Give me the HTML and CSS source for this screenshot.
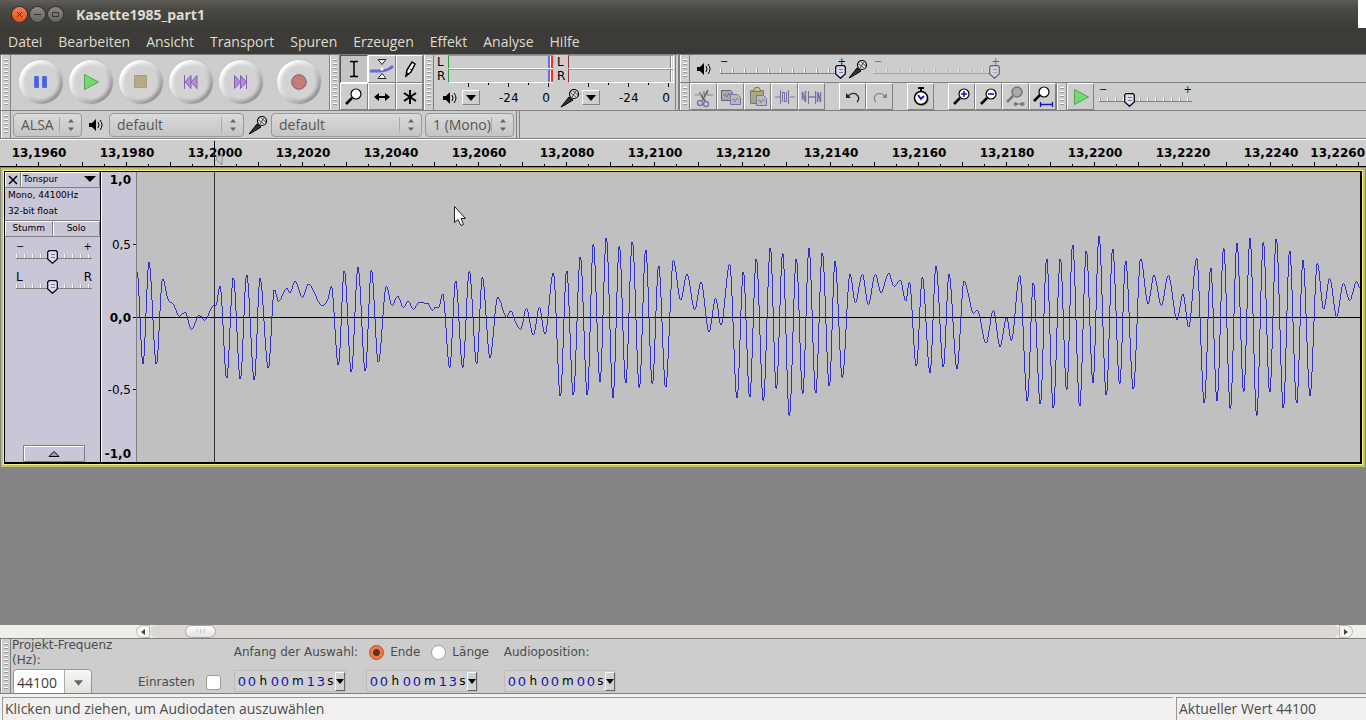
FILE: index.html
```
<!DOCTYPE html>
<html lang="de">
<head>
<meta charset="UTF-8">
<title>Kasette1985_part1</title>
<link rel="stylesheet" href="styles.css">
</head>
<body>

<!-- shared icons -->
<svg class="defs" width="0" height="0">
    <symbol id="i-speaker" viewBox="0 0 16 14">
        <path d="M1 5h3l4-4v12l-4-4H1z" fill="#000"/>
        <path d="M10 4q2 3 0 6M12 2q4 5 0 10" fill="none" stroke="#000"/>
    </symbol>
    <symbol id="i-mic" viewBox="0 0 20 20">
        <path d="M1 19L9 9l4 3-8 5z" fill="#333" stroke="#000"/>
        <circle cx="14" cy="6" r="4.500" fill="#ddd" stroke="#000" stroke-width="1.200"/>
        <path d="M11 5l5 4M13 3l5 4M12 9l4-6" stroke="#000" stroke-width=".6"/>
    </symbol>
    <symbol id="i-lens" viewBox="0 0 20 20">
        <path d="M8 11l-6 6" stroke="currentColor" stroke-width="2.500"/>
        <circle cx="12" cy="7" r="5" fill="#fff" stroke="currentColor" stroke-width="1.200"/>
    </symbol>
    <symbol id="i-down" viewBox="0 0 10 6"><path d="M0 0h10L5 6z"/></symbol>
</svg>

<header class="titlebar">
    <button class="win win-close" aria-label="Schließen"><svg viewBox="0 0 15 15"><path d="M5 5l5 5M10 5l-5 5"/></svg></button>
    <button class="win" aria-label="Minimieren"><svg viewBox="0 0 15 15"><path d="M4 7.500h7"/></svg></button>
    <button class="win" aria-label="Maximieren"><svg viewBox="0 0 15 15"><path d="M4.500 5.500h6v4h-6z"/></svg></button>
    <h1>Kasette1985_part1</h1>
</header>

<nav class="menu">
    <a href="#">Datei</a>
    <a href="#">Bearbeiten</a>
    <a href="#">Ansicht</a>
    <a href="#">Transport</a>
    <a href="#">Spuren</a>
    <a href="#">Erzeugen</a>
    <a href="#">Effekt</a>
    <a href="#">Analyse</a>
    <a href="#">Hilfe</a>
</nav>

<div class="toolbars">
    <!-- transport -->
    <div class="grip"></div>
    <div class="transport">
        <button class="round" aria-label="Pause"><svg width="16" height="16"><path d="M1.500 2.500h4v11h-4zM9.500 2.500h4v11h-4z" fill="#3f66ee" stroke="#5a74d8"/></svg></button>
        <button class="round" aria-label="Wiedergabe"><svg width="16" height="16"><path d="M1.500 .5v15l14-7.500z" fill="#6fdc6b" stroke="#5aa058"/></svg></button>
        <button class="round" aria-label="Stopp"><svg width="16" height="16"><path d="M1.500 1.500h12v12h-12z" fill="#baa987" stroke="#a99b80"/></svg></button>
        <button class="round" aria-label="Zum Anfang"><svg width="16" height="16"><path d="M1.500 1v14M8 1.500v13l-6-6.500zM14 1.500v13l-6-6.500z" fill="#b48be0" stroke="#8560a8"/></svg></button>
        <button class="round" aria-label="Zum Ende"><svg width="16" height="16"><path d="M13.500 1v14M1.500 1.500v13l6-6.500zM7.500 1.500v13l6-6.500z" fill="#b48be0" stroke="#8560a8"/></svg></button>
        <button class="round record" aria-label="Aufnahme"><svg width="16" height="16"><circle cx="8" cy="8" r="7.300" fill="#c47b7b" stroke="#8f5a5a"/></svg></button>
    </div>

    <!-- tools -->
    <div class="grip"></div>
    <div class="tools">
        <button class="tool on" aria-label="Auswahl"><svg width="20" height="20"><path d="M6 2.500h3l1 1 1-1h3M6 17.500h3l1-1 1 1h3M10 3v14" fill="none" stroke="#000" stroke-width="1.500"/></svg></button>
        <button class="tool" aria-label="Hüllkurve"><svg width="26" height="22"><path d="M1 13h10q8 0 13-5" fill="none" stroke="#6a6ae0" stroke-width="3"/><path d="M9 1.500h8l-4 5zM9 20.500h8l-4-5z" fill="#fff" stroke="#222"/><circle cx="13" cy="11" r="1.500" fill="#fff"/></svg></button>
        <button class="tool" aria-label="Zeichnen"><svg width="20" height="20"><path d="M6 17l1-6 5-8 3 2-4 8z" fill="#fff" stroke="#000" stroke-width="1.500"/><path d="M6 17l1-3 2 1zM10 10l2 1" stroke="#000"/></svg></button>
        <button class="tool" aria-label="Zoom"><svg width="20" height="20"><use href="#i-lens"/></svg></button>
        <button class="tool" aria-label="Verschieben"><svg width="20" height="20"><path d="M3 10h14" stroke="#000" stroke-width="2"/><path d="M2 10l5-4v8zM18 10l-5-4v8z"/></svg></button>
        <button class="tool" aria-label="Multi"><svg width="20" height="20"><path d="M10 3v14M4 6l12 8M16 6L4 14" stroke="#000" stroke-width="2"/></svg></button>
    </div>

    <!-- meters -->
    <div class="grip"></div>
    <div class="meters">
        <div class="meter play">
            <div class="chan"><span>L</span><i></i></div>
            <div class="chan"><span>R</span><i></i></div>
            <div class="ticks"></div>
            <div class="scale">
                <svg width="20" height="14"><use href="#i-speaker"/></svg>
                <button aria-label="Ausgabepegel"><svg width="10" height="6"><use href="#i-down"/></svg></button>
                <span class="mid">-24</span><span>0</span>
            </div>
        </div>
        <div class="meter rec">
            <div class="chan"><span>L</span><i></i></div>
            <div class="chan"><span>R</span><i></i></div>
            <div class="ticks"></div>
            <div class="scale">
                <svg width="20" height="20"><use href="#i-mic"/></svg>
                <button aria-label="Eingabepegel"><svg width="10" height="6"><use href="#i-down"/></svg></button>
                <span class="mid">-24</span><span>0</span>
            </div>
        </div>
    </div>

    <div class="stack">
        <!-- mixer -->
        <div class="bar">
            <div class="grip"></div>
            <svg class="mix-speaker" width="16" height="14"><use href="#i-speaker"/></svg>
            <label class="slider"><span>−</span><span>+</span><input type="range" value="100" aria-label="Ausgabelautstärke"></label>
            <svg class="mix-mic" width="20" height="20"><use href="#i-mic"/></svg>
            <label class="slider off"><span>−</span><span>+</span><input type="range" value="100" disabled aria-label="Eingabelautstärke"></label>
        </div>
        <!-- edit -->
        <div class="bar">
            <div class="grip"></div>
            <button class="edit" aria-label="Ausschneiden"><svg width="22" height="22"><path d="M2 9h4l1-3 2 6 2-7 1 6 2-6 1 5 1-1h4" fill="none" stroke="#888"/><path d="M15 4L9 15M8 9l5 7" fill="none" stroke="#666" stroke-width="1.500"/><circle cx="7" cy="17" r="2.500" fill="none" stroke="#7878b8" stroke-width="1.500"/><circle cx="13" cy="18" r="2.500" fill="none" stroke="#7878b8" stroke-width="1.500"/></svg></button>
            <button class="edit" aria-label="Kopieren"><svg width="22" height="22"><path d="M1.500 4.500h9l2 2v8h-11z" fill="#aaa" stroke="#666"/><path d="M3 10l2-2 2 3 2-4 2 3" fill="none" stroke="#777"/><path d="M10.500 8.500h7l3 3v7h-10z" fill="#bbb" stroke="#7474b4"/><path d="M12 14l2-1 1 3 2-4 2 2" fill="none" stroke="#888"/></svg></button>
            <button class="edit" aria-label="Einfügen"><svg width="22" height="22"><path d="M3.500 4.500h13v13h-13z" fill="#aaa884" stroke="#777"/><path d="M6 5.500h8l-2-4H8z" fill="#c8c070" stroke="#777"/><path d="M9.500 9.500h7l3 3v7h-10z" fill="#bbb" stroke="#7474b4"/><path d="M11 15l2-1 1 3 2-4 2 2" fill="none" stroke="#888"/></svg></button>
            <button class="edit" aria-label="Trimmen"><svg width="22" height="22"><path d="M1 11h5M16 11h5M8.500 16V6M10.500 6v10M12.500 6v10M8 6.500h3M10 15.500h3" fill="none" stroke="#7474b4"/><path d="M6.500 4v14M14.500 4v14" stroke="#777"/></svg></button>
            <button class="edit" aria-label="Stille"><svg width="22" height="22"><path d="M1.500 14V6l3 10V5M7.500 11h7M16.500 16V6l3 10V6" fill="none" stroke="#7474b4" stroke-width="1.500"/><path d="M7.500 5v13M14.500 5v13" stroke="#777"/></svg></button>
            <button class="edit gap" aria-label="Rückgängig"><svg width="20" height="20"><path d="M5 9q4-4 8-2 5 4 1 8" fill="none" stroke="#222" stroke-width="1.300"/><path d="M3 6v5h5z" fill="#222"/></svg></button>
            <button class="edit" aria-label="Wiederherstellen"><svg width="20" height="20"><path d="M15 9q-4-4-8-2-5 4-1 8" fill="none" stroke="#888" stroke-width="1.300"/><path d="M17 6v5h-5z" fill="#888"/></svg></button>
            <button class="edit gap" aria-label="Sync-Lock"><svg width="20" height="22"><circle cx="11" cy="13" r="7" fill="#999"/><circle cx="10" cy="12" r="6.500" fill="#fff" stroke="#000" stroke-width="1.500"/><path d="M10 5V2M7 2h6" stroke="#000" stroke-width="2"/><path d="M7 9l3 4 3-3" fill="none" stroke="#2020b0" stroke-width="2"/></svg></button>
            <button class="edit gap" aria-label="Vergrößern"><svg width="20" height="20"><use href="#i-lens"/><path d="M12 4v6M9 7h6" stroke="#1414b4" stroke-width="1.600"/></svg></button>
            <button class="edit" aria-label="Verkleinern"><svg width="20" height="20"><use href="#i-lens"/><path d="M9 7h6" stroke="#1414b4" stroke-width="1.600"/></svg></button>
            <button class="edit" aria-label="Auswahl einpassen"><svg width="22" height="22"><path d="M8 10l-6 6" stroke="#777" stroke-width="2.500"/><circle cx="12" cy="6" r="5" fill="#aaa" stroke="#777" stroke-width="1.500"/><path d="M8 18h12M10 16l3 2-3 2zM18 16l-3 2 3 2z" stroke="#777" fill="#777"/></svg></button>
            <button class="edit" aria-label="Projekt einpassen"><svg width="22" height="22"><path d="M8 9l-6 6" stroke="#000" stroke-width="2.500"/><circle cx="12" cy="6" r="5" fill="#fff" stroke="#000" stroke-width="1.200"/><path d="M8.500 16v5M20.500 16v5M9 18.500h11" stroke="#1414b4" stroke-width="1.300"/></svg></button>
            <div class="grip"></div>
            <button class="edit" aria-label="Mit Geschwindigkeit abspielen"><svg width="18" height="18"><path d="M2.500 1.500v15l14-7.500z" fill="#6fdc6b" stroke="#5aa058"/></svg></button>
            <label class="slider speed"><span>−</span><span>+</span><input type="range" value="31" aria-label="Geschwindigkeit"></label>
        </div>
    </div>
</div>

<!-- devices -->
<div class="devices">
    <div class="grip"></div>
    <select class="host" aria-label="Host"><option>ALSA</option></select>
    <svg class="dev-speaker" width="16" height="14"><use href="#i-speaker"/></svg>
    <select class="out" aria-label="Ausgabegerät"><option>default</option></select>
    <svg class="dev-mic" width="20" height="20"><use href="#i-mic"/></svg>
    <select class="in" aria-label="Eingabegerät"><option>default</option></select>
    <select class="channels" aria-label="Kanäle"><option>1 (Mono)</option></select>
    <div class="end"></div>
</div>

<!-- timeline -->
<div class="timeline">
    <span>13,1960</span><span>13,1980</span><span>13,2000</span><span>13,2020</span>
    <span>13,2040</span><span>13,2060</span><span>13,2080</span><span>13,2100</span>
    <span>13,2120</span><span>13,2140</span><span>13,2160</span><span>13,2180</span>
    <span>13,2200</span><span>13,2220</span><span>13,2240</span><span class="last">13,2260</span>
    <svg class="playhead" width="10" height="27"><path d="M.5 1v22" stroke="#000"/><path d="M8 14v11l-6-6z" fill="#ccc" stroke="#888"/></svg>
</div>

<main class="project">
    <section class="track">
        <div class="panel">
            <div class="panel-head">
                <button class="close" aria-label="Spur schließen"><svg width="10" height="10"><path d="M1 1l8 8M9 1l-8 8" stroke="#000" stroke-width="1.500"/></svg></button>
                <button class="name">Tonspur<svg width="12" height="6" viewBox="0 0 10 6" preserveAspectRatio="none"><path d="M0 0h10L5 6z"/></svg></button>
            </div>
            <p class="info">Mono, 44100Hz<br>32-bit float</p>
            <div class="panel-buttons"><button>Stumm</button><button>Solo</button></div>
            <label class="slider gain"><span>−</span><span>+</span><input type="range" value="47" aria-label="Verstärkung"></label>
            <label class="slider pan"><span>L</span><span>R</span><input type="range" value="47" aria-label="Balance"></label>
            <button class="collapse" aria-label="Einklappen"><svg width="12" height="8"><path d="M1 6.500h10L6 1.500z" fill="#a0a0b4" stroke="#000"/></svg></button>
        </div>
        <div class="levels">
            <b>1,0</b><span>0,5</span><b>0,0</b><span>-0,5</span><b>-1,0</b>
        </div>
        <svg class="wave" viewBox="21 -159 3669 870" preserveAspectRatio="none">
            <path class="zero" d="M21 277.500H3690"/>
            <path class="signal" id="signal"/>
            <path class="mark" d="M253.500 -159V711"/>
        </svg>
    </section>
    <svg class="pointer" width="14" height="22"><path d="M1.500 1.500v16l3.500-3 3 6 2.500-1-2.500-6h4.500z" fill="#fff" stroke="#222"/></svg>
</main>

<div class="scrollbar">
    <button class="left" aria-label="Links"><svg width="4" height="6"><path d="M4 0v6L0 3z" fill="#444"/></svg></button>
    <div class="trough"><div class="thumb">ı ı ı</div></div>
    <button class="right" aria-label="Rechts"><svg width="4" height="6"><path d="M0 0v6l4-3z" fill="#444"/></svg></button>
</div>

<div class="selection">
    <div class="grip"></div>
    <div class="rate">
        <label for="rate">Projekt-Frequenz (Hz):</label>
        <div class="combo">
            <input id="rate" type="text" value="44100">
            <button aria-label="Frequenz wählen"><svg width="9" height="6" viewBox="0 0 10 6"><path d="M0 0h10L5 6z" fill="#666"/></svg></button>
        </div>
    </div>
    <label class="snap">Einrasten <input type="checkbox"></label>
    <div class="range">
        <div class="captions">
            <span>Anfang der Auswahl:</span>
            <label class="pick"><input type="radio" name="mode" checked>Ende</label>
            <label class="pick"><input type="radio" name="mode">Länge</label>
        </div>
        <div class="times">
            <div class="time"><b>0</b><b>0</b><i>h</i><b>0</b><b>0</b><i class="m">m</i><b>1</b><b>3</b><i>s</i><button aria-label="Format"><svg width="8" height="5" viewBox="0 0 10 6"><path d="M0 0h10L5 6z"/></svg></button></div>
            <div class="time"><b>0</b><b>0</b><i>h</i><b>0</b><b>0</b><i class="m">m</i><b>1</b><b>3</b><i>s</i><button aria-label="Format"><svg width="8" height="5" viewBox="0 0 10 6"><path d="M0 0h10L5 6z"/></svg></button></div>
        </div>
    </div>
    <div class="range">
        <div class="captions"><span>Audioposition:</span></div>
        <div class="times">
            <div class="time"><b>0</b><b>0</b><i>h</i><b>0</b><b>0</b><i class="m">m</i><b>0</b><b>0</b><i>s</i><button aria-label="Format"><svg width="8" height="5" viewBox="0 0 10 6"><path d="M0 0h10L5 6z"/></svg></button></div>
        </div>
    </div>
</div>

<footer class="status">
    <p>Klicken und ziehen, um Audiodaten auszuwählen</p>
    <p class="value">Aktueller Wert 44100</p>
</footer>

<script src="wave.js"></script>
</body>
</html>
```
FILE: styles.css
```
* {
box-sizing: border-box;
}

body {
margin: 0;
min-height: 100vh;
display: flex;
flex-direction: column;
background: #cdcdcd;
font-family: "Open Sans", "Noto Sans", sans-serif;
font-size: 14px;
color: #4c4c4c;
overflow-x: hidden;
}

button {
display: flex;
align-items: center;
justify-content: center;
flex: none;
padding: 0;
border: 0;
background: none;
font: inherit;
color: #000;
}

svg {
display: block;
flex: none;
}

p {
margin: 0;
}

.defs {
position: absolute;
}

/* window frame */
.titlebar {
display: flex;
align-items: center;
gap: 3px;
height: 28px;
padding-left: 12px;
border-right: 8px solid #fff;
background: linear-gradient(#5e5d57, #4b4a45 30%, #3c3b37);
}

.titlebar h1 {
margin: 0 0 0 10px;
font-size: 14px;
font-weight: 700;
color: #dfdbd2;
}

.win {
width: 15px;
height: 15px;
border-radius: 50%;
background: linear-gradient(#8b8981, #65645d);
box-shadow: 0 0 0 1px #33322e;
}

.win svg {
width: 15px;
height: 15px;
fill: none;
stroke: #35342f;
}

.win-close {
background: linear-gradient(#f58052, #e1531d);
}

.menu {
display: flex;
align-items: center;
gap: 16px;
height: 26px;
padding-left: 8px;
background: #3c3b37;
}

.menu a {
color: #dfdbd2;
text-decoration: none;
}

/* toolbars */
.toolbars {
display: flex;
border-top: 1px solid #7e7e7e;
border-bottom: 1px solid #808080;
}

.grip {
flex: none;
width: 11px;
border-left: 1px solid #808080;
border-right: 1px solid #808080;
background:
repeating-linear-gradient(#fff 0 1px, #999 1px 2px, transparent 2px 4px) 3px 4px / 4px calc(100% - 8px) no-repeat,
linear-gradient(90deg, #fff 1px, transparent 1px);
}

.transport {
display: flex;
align-items: center;
width: 318px;
padding: 0 0 1px 8px;
}

.round {
position: relative;
width: 44px;
height: 44px;
margin-right: 6px;
border-radius: 50%;
background: linear-gradient(135deg, #fff 18%, #d4d4d4 50%, #8a8a8a 88%);
box-shadow: 0 0 2px #bbb;
}

.round::before {
content: "";
position: absolute;
inset: 6px;
border-radius: 50%;
background: #d3d3d3;
box-shadow: 0 0 3px 2px #d3d3d3;
}

.round svg {
position: relative;
}

.record {
margin-left: 8px;
}

.tools {
display: grid;
grid-template-columns: 28px 28px 27px;
grid-template-rows: 28px 27px;
}

.tool,
.edit {
border: 1px solid;
border-color: #fff #808080 #808080 #fff;
}

.tool.on {
border-color: #555 #fff #fff #555;
background: #c4c4c4;
}

.meters {
display: flex;
width: 242px;
border-right: 1px solid #808080;
font: 12px "DejaVu Sans", sans-serif;
color: #000;
}

.meter {
width: 120px;
}

.chan {
display: flex;
height: 14px;
line-height: 14px;
}

.chan span {
width: 14px;
padding-left: 3px;
}

.chan i {
flex: 1;
border: 1px solid #fff;
border-top-color: #999;
border-left-color: #2f9e3f;
}

.play .chan i {
margin-right: 1px;
border-right: 0;
background: linear-gradient(90deg, #6a6af0 2px, #fff 2px 3px, #ff2a2a 3px) 99px 0 / 5px 100% no-repeat;
}

.rec .chan i {
border-left-color: #a03030;
background: linear-gradient(90deg, #808080 1px, #fff 1px) 101px 0 / 2px 100% no-repeat;
}

.ticks {
height: 5px;
margin-left: 34px;
background:
repeating-linear-gradient(90deg, #000 0 1px, transparent 1px 40px) 0 0 / 100% 4px no-repeat,
repeating-linear-gradient(90deg, transparent 0 20px, #000 20px 21px, transparent 21px 40px) 0 0 / 100% 2px no-repeat;
}

.scale {
display: flex;
align-items: center;
height: 19px;
padding: 0 4px 0 6px;
}

.scale button {
width: 18px;
height: 15px;
margin-left: 2px;
border: 1px solid;
border-color: #fff #808080 #808080 #fff;
}

.scale .mid {
margin: 0 auto 0 19px;
}

.stack {
flex: 1;
margin-left: 2px;
border-left: 1px solid #808080;
}

.bar {
display: flex;
align-items: center;
height: 27px;
}

.bar:first-child {
height: 28px;
border-bottom: 1px solid #808080;
}

.bar .grip {
align-self: stretch;
}

.edit {
width: 27px;
height: 27px;
}

.gap {
margin-left: 14px;
}

.mix-speaker {
margin: 0 8px 0 6px;
}

.mix-mic {
margin: 0 6px 0 2px;
}

/* sliders */
.slider {
display: grid;
grid-template-columns: 1fr auto;
grid-template-rows: 8px 14px;
flex: none;
width: 126px;
height: 24px;
font: 10px/10px "DejaVu Sans", sans-serif;
color: #000;
}

.slider input {
grid-column: 1 / 3;
appearance: none;
width: 100%;
height: 14px;
margin: 0;
background:
repeating-linear-gradient(90deg, #fff 0 1px, #999 1px 2px, transparent 2px 12px) 0 4px / 100% 4px no-repeat,
linear-gradient(#808080, #808080) 0 8px / 100% 1px no-repeat;
}

.slider input::-webkit-slider-thumb {
appearance: none;
width: 11px;
height: 14px;
background: url("data:image/svg+xml,%3Csvg xmlns='http://www.w3.org/2000/svg' width='11' height='14'%3E%3Cpath d='M2 .7h7l1.300 1.300v7L5.500 13.300.7 9V2z' fill='%23dcdcf0' stroke='%23000' stroke-width='1.200'/%3E%3Cpath d='M4 4.500h4M4 7.500h4' stroke='%237878a0'/%3E%3C/svg%3E");
}

.slider.off {
opacity: .5;
}

.speed {
width: 93px;
margin-left: 5px;
}

.gain,
.pan {
width: 76px;
margin-left: 11px;
}

.gain {
margin-top: 5px;
}

.pan {
margin-top: 6px;
font-size: 12px;
}

.speed input,
.gain input,
.pan input {
background:
repeating-linear-gradient(90deg, #fff 0 1px, #aaa 1px 2px, transparent 2px 8px) 0 4px / 100% 4px no-repeat,
linear-gradient(#808080, #808080) 0 8px / 100% 1px no-repeat;
}

/* devices */
.devices {
display: flex;
align-items: center;
height: 28px;
border-bottom: 1px solid #808080;
}

.devices .grip,
.devices .end {
align-self: stretch;
}

.devices select {
appearance: none;
height: 24px;
padding: 0 26px 1px 7px;
border: 1px solid #999;
border-radius: 4px;
background:
url("data:image/svg+xml,%3Csvg xmlns='http://www.w3.org/2000/svg' width='22' height='18'%3E%3Cpath d='M.5 1v16' stroke='%23aaa'/%3E%3Cpath d='M9 6.500h6L12 3zM9 11.500h6l-3 3.500z' fill='%23666'/%3E%3C/svg%3E") right center no-repeat,
linear-gradient(#dadada, #c4c4c4);
font: 14px "Open Sans", sans-serif;
color: #58554f;
}

.host {
width: 69px;
margin-left: 2px;
}

.out {
width: 135px;
}

.in {
width: 151px;
}

.devices .channels {
width: 89px;
margin-left: 3px;
padding-right: 22px;
}

.dev-speaker {
margin: 0 5px 0 6px;
}

.dev-mic {
margin: 0 3px 0 4px;
}

.end {
width: 4px;
margin-left: 2px;
border-left: 1px solid #808080;
border-right: 1px solid #808080;
}

/* timeline */
.timeline {
position: relative;
display: flex;
height: 28px;
overflow: hidden;
border-top: 1px solid #fff;
border-bottom: 1px solid #000;
background:
repeating-linear-gradient(90deg, transparent 0 38px, #000 38px 39px, transparent 39px 44px) 0 22px / 100% 4px no-repeat,
repeating-linear-gradient(90deg, transparent 0 16px, #000 16px 17px, transparent 17px 44px) 0 24px / 100% 2px no-repeat;
font: bold 12px/26px "DejaVu Sans", sans-serif;
color: #000;
}

.timeline span {
flex: 0 0 88px;
text-align: center;
}

.timeline span:first-child {
margin-left: -5px;
}

.timeline .last {
display: flex;
flex: 1;
justify-content: flex-end;
min-width: 0;
padding-right: 1px;
}

.playhead {
position: absolute;
left: 214px;
top: 0;
}

/* track */
.project {
position: relative;
flex: 1;
background: #858585;
}

.track {
display: flex;
height: 293px;
margin: 4px;
border: solid #000;
border-width: 1px 2px 2px 1px;
box-shadow: 0 0 0 1px #f7f27a, 0 0 0 3px #c3bf7c;
}

.panel {
display: flex;
flex-direction: column;
width: 96px;
border-right: 1px solid #000;
background: #c9c7d7;
font: 10px "DejaVu Sans", sans-serif;
color: #000;
}

.panel-head,
.panel-buttons {
display: flex;
height: 16px;
border-bottom: 1px solid #808080;
}

.panel-head button,
.panel-buttons button {
border: 1px solid;
border-color: #fff #808080 #c9c7d7 #fff;
}

.panel-head .close {
width: 16px;
}

.panel-head .name {
flex: 1;
justify-content: space-between;
padding: 0 3px 2px 1px;
}

.info {
height: 33px;
margin-top: -1px;
padding-left: 3px;
font-size: 9px;
line-height: 16px;
}

.name,
.panel-buttons {
font-size: 9px;
}

.panel-buttons {
height: 17px;
border-top: 1px solid #808080;
}

.panel-buttons button {
flex: 1;
padding-bottom: 2px;
}

.collapse {
width: 62px;
height: 17px;
margin: auto 0 0 18px;
border: 1px solid #808080;
box-shadow: inset 1px 1px #fff;
}

.levels {
display: grid;
grid-template-rows: 36px 73px 73px 72px 36px;
align-items: center;
justify-items: end;
width: 36px;
padding-right: 5px;
border-left: 1px solid #fff;
border-right: 1px solid #808080;
background:
linear-gradient(#000, #000) 31px 72px / 3px 1px no-repeat,
linear-gradient(#000, #000) 31px 145px / 3px 1px no-repeat,
linear-gradient(#000, #000) 31px 217px / 3px 1px no-repeat,
#c9c7d7;
font: 12px/16px "DejaVu Sans", sans-serif;
color: #000;
}

.levels b:first-child {
align-self: start;
}

.levels b:last-child {
align-self: end;
}

.wave {
flex: 1;
min-width: 0;
height: 290px;
background: #c0c0c0;
}

.wave path {
fill: none;
stroke: #000;
shape-rendering: crispEdges;
}

.zero,
.mark {
vector-effect: non-scaling-stroke;
}

.wave .signal {
stroke: #3232c8;
stroke-width: 3;
}

.wave .mark {
stroke: #333;
}

.pointer {
position: absolute;
left: 453px;
top: 38px;
}

/* scrollbar */
.scrollbar {
display: flex;
height: 13px;
padding: 0 13px 0 136px;
background: #f0eeeb;
}

.scrollbar button {
width: 14px;
border: 1px solid #bbb8b4;
background: #f4f3f1;
}

.scrollbar .left {
border-radius: 7px 0 0 7px;
}

.scrollbar .right {
border-radius: 0 7px 7px 0;
}

.trough {
flex: 1;
padding-left: 35px;
border-radius: 7px;
background: #dbd8d5;
}

.thumb {
width: 31px;
height: 13px;
border: 1px solid #aaa7a2;
border-radius: 7px;
background: linear-gradient(#fff, #e4e2df);
font-size: 7px;
line-height: 10px;
text-align: center;
color: #999;
}

/* selection bar */
.selection {
display: flex;
height: 56px;
overflow: hidden;
border-top: 1px solid #808080;
border-bottom: 1px solid #808080;
font: 12px "DejaVu Sans", sans-serif;
}

.rate {
width: 117px;
padding-left: 1px;
line-height: 15px;
}

.rate label {
display: block;
height: 29px;
margin-top: -1px;
}

.combo {
display: flex;
width: 79px;
height: 28px;
margin: 2px 0 0 1px;
border: 1px solid #9a9792;
border-radius: 4px;
background: #fff;
}

.combo input {
width: 50px;
padding: 0 0 2px 3px;
border: 0;
background: none;
font: 14px "Open Sans", sans-serif;
color: #3c3c3c;
}

.combo button {
flex: 1;
border-left: 1px solid #aaa;
border-radius: 0 4px 4px 0;
background: linear-gradient(#f8f7f6, #e0deda);
}

.snap {
display: flex;
align-items: center;
gap: 11px;
height: 22px;
margin: 32px 13px 0 10px;
}

.snap input,
.pick input {
appearance: none;
width: 15px;
height: 15px;
margin: 0;
border: 1px solid #a09d98;
border-radius: 3px;
background: #fff;
}

.range {
width: 270px;
}

.captions {
display: flex;
align-items: center;
height: 24px;
margin-top: 1px;
}

.pick {
display: flex;
align-items: center;
gap: 6px;
margin-left: 11px;
}

.pick input {
border-radius: 50%;
}

.pick input:checked {
border-color: #b3502a;
background: radial-gradient(circle, #5e3220 0 3px, #f0784a 4px);
}

.times {
display: flex;
gap: 20px;
margin-top: 6px;
}

.time {
display: flex;
align-items: center;
width: 112px;
height: 22px;
padding-left: 2px;
border: 1px solid #bfbdb9;
background: #d0d0d0;
color: #000;
}

.time b {
width: 10px;
font-weight: normal;
font-size: 13px;
color: #1414b0;
text-align: center;
}

.time i {
width: 13px;
font-style: normal;
text-align: center;
}

.time .m {
width: 16px;
}

.time i:nth-last-child(2) {
flex: 1;
}

.time button {
width: 10px;
height: 19px;
border: 1px solid;
border-color: #fff #666 #666 #fff;
}

/* status bar */
.status {
display: flex;
height: 26px;
padding: 3px 0 0 2px;
background: #f1f0ee;
}

.status p {
flex: 1;
padding-left: 2px;
border: 1px solid #999;
border-width: 1px 0 0 1px;
line-height: 22px;
}

.status .value {
flex: 0 0 190px;
margin-left: 3px;
}
```
FILE: wave.js
```
// turning points of the signal, x relative to the start of each section
const sections = [
    { start: 0, points: [
        [21,140],[39,416],[57,112],[79,418],[98,160],[115,225],[130,238],[148,273],[165,262],[184,313],
        [208,271],[224,285],[250,242],[258,240],[270,184],[290,460],[310,157],[331,464],[350,148],[373,466],
        [390,160],[415,430],[433,194],[446,229],[470,190],[480,203],[495,169],[517,216],[535,178],[577,241],
        [592,228],[604,184],[625,422],[643,136],[664,442],[684,127],[706,440],[724,134],[745,412],[769,184],
        [786,241],[803,214],[820,247],[835,229],[850,253],[868,232],[892,234],[908,256],[918,245],[926,248],
        [938,206],[959,428],[977,166],[998,428],[1018,139],[1040,418],[1057,157],[1080,398],[1103,217],
        [1130,276],[1142,257],[1156,290],[1172,313],[1189,250],[1210,331],[1228,247]
    ]},
    { start: 1230, points: [
        [15,328],[40,142],[61,515],[80,136],[100,512],[121,94],[142,512],[160,55],[180,470],[199,37],
        [219,518],[238,61],[257,476],[277,49],[298,490],[317,73],[337,478],[356,121],[377,488],[400,106],
        [422,226],[441,148],[464,254],[483,172],[507,320],[527,220],[543,301],[569,118],[591,520],[610,139],
        [629,518],[649,100],[670,529],[691,67],[709,494],[728,82],[748,574],[769,100],[788,509],[807,70],
        [827,506],[847,82],[868,485],[885,109],[907,458],[930,148],[946,233],[967,148],[985,239],[1006,148],
        [1023,203],[1046,145],[1062,184],[1081,166],[1097,229],[1108,172],[1129,425],[1147,157],[1170,443],
        [1188,124],[1210,428],[1227,148]
    ]},
    { start: 2460, points: [
        [21,431],[42,169],[55,208],[70,265],[82,256],[108,355],[130,256],[150,365],[170,278],[184,347],
        [209,151],[232,529],[250,172],[271,539],[290,100],[310,551],[331,100],[350,497],[368,58],[389,545],
        [409,76],[429,473],[447,34],[469,512],[488,70],[509,478],[527,106],[550,494],[572,100],[594,236],
        [612,151],[634,241],[655,151],[681,284],[699,208],[716,307],[740,100],[763,536],[782,127],[801,527],
        [821,67],[841,553],[861,55],[881,503],[900,40],[920,574],[940,49],[959,503],[979,40],[1000,551],
        [1019,76],[1040,536],[1059,106],[1080,512],[1102,115],[1121,253],[1139,160],[1160,275],[1180,175],
        [1199,226],[1220,169],[1230,190]
    ]}
];

const pts = sections.flatMap(s => s.points.map(([x, y]) => [x + s.start, y]));

// flat at peaks, sloped where the signal keeps its direction
function slope(i) {
    if (i === 0 || i === pts.length - 1) return 0;
    const a = (pts[i][1] - pts[i - 1][1]) / (pts[i][0] - pts[i - 1][0]);
    const b = (pts[i + 1][1] - pts[i][1]) / (pts[i + 1][0] - pts[i][0]);
    return a * b > 0 ? 2 * a * b / (a + b) : 0;
}

let seg = 0;
function level(x) {
    while (seg < pts.length - 2 && x > pts[seg + 1][0]) seg++;
    while (seg > 0 && x < pts[seg][0]) seg--;
    const [x0, y0] = pts[seg];
    const [x1, y1] = pts[seg + 1];
    const w = x1 - x0;
    const t = Math.min(1, (x - x0) / w);
    return y0 + (y1 - y0) * t * t * (3 - 2 * t)
        + slope(seg) * w * t * (1 - t) * (1 - t)
        - slope(seg + 1) * w * t * t * (1 - t);
}

// one vertical stroke per column, from the lowest to the highest value in it
const step = 3;
let d = '';
for (let x = 21; x < 3690; x += step) {
    const a = level(x);
    const b = level(x + step / 2);
    const c = level(x + step);
    const top = Math.round(Math.min(a, b, c) / step) * step;
    const bottom = Math.max(top + step, Math.round(Math.max(a, b, c) / step) * step);
    d += `M${x + step / 2} ${top}V${bottom}`;
}
document.getElementById('signal').setAttribute('d', d);
```
